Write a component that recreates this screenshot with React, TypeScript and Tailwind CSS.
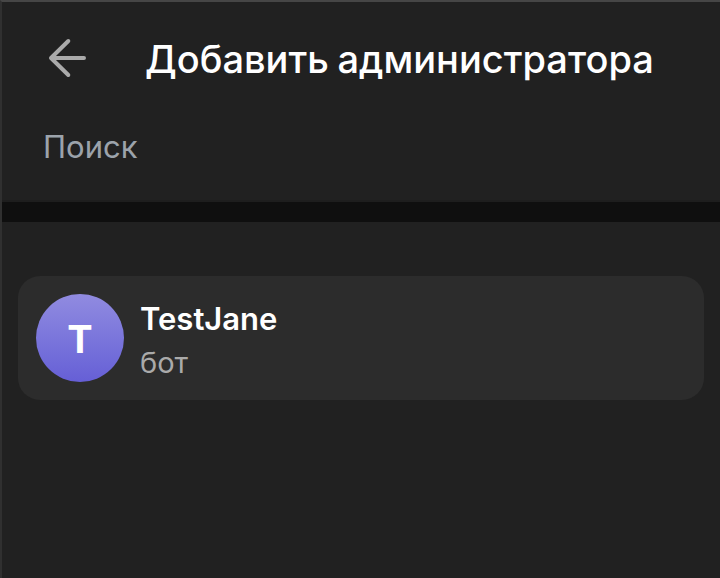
import { useState } from "react";

type Member = {
  id: number;
  name: string;
  status: string;
};

const members: Member[] = [{ id: 1, name: "TestJane", status: "бот" }];

function BackIcon() {
  return (
    <svg
      className="w-10 h-10"
      viewBox="0 0 40 40"
      fill="none"
      stroke="currentColor"
      strokeWidth="4"
      strokeLinecap="round"
      strokeLinejoin="round"
    >
      <path d="M36 20H3.5M20.3 3L3 20l17.3 17" />
    </svg>
  );
}

function MemberRow({ member }: { member: Member }) {
  return (
    <button className="flex w-full h-[124px] items-center gap-4 rounded-[22px] bg-[#2c2c2c] px-[18px] text-left cursor-pointer">
      <div className="flex w-[88px] h-[88px] shrink-0 items-center justify-center rounded-full bg-linear-to-b from-[#918be0] to-[#665fd6] pt-[3px] text-[38px] font-bold text-white">
        {member.name[0]}
      </div>
      <div className="pt-1.5">
        <h3 className="text-[31px] leading-[44px] font-semibold text-white">
          {member.name}
        </h3>
        <p className="text-[29px] leading-[44px] text-[#aaaaaa]">
          {member.status}
        </p>
      </div>
    </button>
  );
}

export default function App() {
  const [search, setSearch] = useState<string>("");

  const filteredMembers = members.filter((member) =>
    member.name.toLowerCase().includes(search.toLowerCase()),
  );

  return (
    <div className="h-[578px] overflow-hidden border-t-2 border-l-2 border-t-[#464646] border-l-[#303030] bg-[#212121] font-['Inter',sans-serif]">
      <header className="flex h-[112px] items-center gap-[57px] pl-[46px]">
        <button className="text-[#aaaaaa] cursor-pointer">
          <BackIcon />
        </button>
        <h1 className="pt-0.5 text-[38px] leading-none font-medium [word-spacing:-1.5px] whitespace-nowrap text-white">
          Добавить администратора
        </h1>
      </header>

      <div className="h-[88px] border-b-2 border-[#1e1e1e] pl-[41px] pt-2">
        <input
          type="text"
          value={search}
          onChange={(e) => setSearch(e.target.value)}
          placeholder="Поиск"
          className="h-12 w-full bg-transparent text-[31px] text-white outline-none placeholder:text-[#9ca3ab]"
        />
      </div>

      <div className="h-5 bg-[#0f0f0f]" />

      <div className="pt-[54px] pl-4 pr-4">
        {filteredMembers.map((member) => (
          <MemberRow key={member.id} member={member} />
        ))}
      </div>
    </div>
  );
}
